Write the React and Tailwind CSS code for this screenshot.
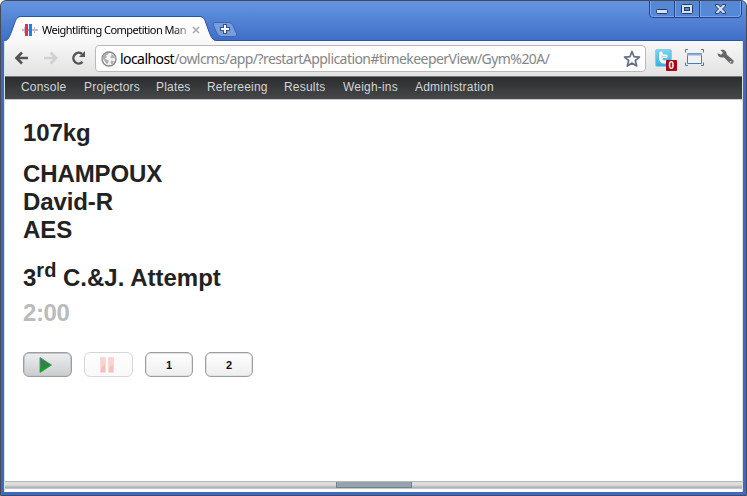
const menuItems = [
  ['Console', 'w-[63px]'],
  ['Projectors', 'w-[72px]'],
  ['Plates', 'w-[51px]'],
  ['Refereeing', 'w-[77px]'],
  ['Results', 'w-[59px]'],
  ['Weigh-ins', 'w-[72px]'],
  ['Administration', 'w-[90px]'],
];

function WindowControls() {
  return (
    <svg className="absolute left-[649px] top-0" width="94" height="19" viewBox="0 0 94 19" fill="none">
      <path d="M.5 1v13q0 3.500 3.500 3.500h85q3.500 0 3.500-3.500V1" fill="#5688d8" stroke="#25468c" />
      <path d="M1.500 1v12.500q0 3 3 3h84q3 0 3-3V1M26.500 1v15M51.500 1v15" stroke="#7ba5e6" />
      <path d="M25.500 1v16M50.500 1v16" stroke="#25468c" />
      <rect x="7.500" y="9.500" width="11" height="4" rx="1" fill="#d3e0f5" stroke="#26395f" />
      <rect x="32.500" y="4.500" width="11" height="9" rx="1" fill="#d3e0f5" stroke="#26395f" />
      <rect x="35.500" y="7.500" width="5" height="3" fill="#5688d8" stroke="#26395f" />
      <path d="M66.500 4.500h3l2 2.500 2-2.500h3v1.500L73.500 9l3 3v1.500h-3l-2-2.500-2 2.500h-3V12l3-3-3-3z" fill="#d3e0f5" stroke="#26395f" />
    </svg>
  );
}

function TabShape() {
  return (
    <svg className="absolute left-0 top-0" width="747" height="44" viewBox="0 0 747 44" fill="none">
      <defs>
        <linearGradient id="tab" x1="0" y1="0" x2="0" y2="1">
          <stop stopColor="#fff" />
          <stop offset="1" stopColor="#f8f8f8" />
        </linearGradient>
      </defs>
      <path d="M4 44V41.500C8 40 9 38 11 33l4-11c1.500-4 3-5 6-5h178c4 0 5 1.500 6.500 5l4 11c2 5 3.500 8 7.500 8h524l2 3z" fill="url(#tab)" />
      <path d="M4 41.500C8 40 9 38 11 33l4-11c1.500-4 3-5.500 6-5.500h178c4 0 5 1.500 6.500 5.500l4 11c2 5 3.500 7.500 7.500 7.500h524l2 2" stroke="#2c559f" />
      <path d="M214.500 22.500h14q3 0 4.500 3l3.500 8q1 3-2 3h-13q-3 0-4.500-3l-3.500-8q-1.500-3 1-3z" fill="#779ddd" stroke="#3a65b2" />
      <path d="M220 29h10M225 24v10" stroke="#35558f" strokeWidth="4" />
      <path d="M221 29h8M225 25v8" stroke="#f4f7fc" strokeWidth="2" />
    </svg>
  );
}

function TabIcon() {
  return (
    <svg width="16" height="14" viewBox="0 0 16 14" shapeRendering="crispEdges">
      <path d="M0 6h16v2H0zM2 4h1v6H2zM12 4h1v6h-1z" fill="#c9b7cc" />
      <path d="M3 1h3v12H3z" fill="#e52d50" />
      <path d="M7 1h3v12H7z" fill="#1684ef" />
      <path d="M6 6h1v2H6z" fill="#b6a3c8" />
    </svg>
  );
}

function NavIcons() {
  return (
    <svg width="74" height="18" viewBox="0 0 74 18" fill="none">
      <path d="M2 9h12M8 3.500L2.500 9 8 14.500" stroke="#555" strokeWidth="2.700" />
      <path d="M30 9h12M36.500 3.500L42 9l-5.500 5.500" stroke="#d0d0d0" strokeWidth="2.700" />
      <path d="M68.500 12.800A5.300 5.300 0 1 1 68 5" stroke="#555" strokeWidth="2.500" />
      <path d="M71 2v6h-6z" fill="#555" />
    </svg>
  );
}

function Globe() {
  return (
    <svg className="shrink-0" width="16" height="16" viewBox="0 0 16 16">
      <circle cx="8" cy="8" r="7" fill="#f4f4f4" stroke="#858585" strokeWidth="1.300" />
      <path d="M2 5l3-3 3-.200-1 1.700-2 1 1 1.500-2 1.500 2 1.500 2 .5-1 2.500-1 1.500-2-3L2 8zM10 3l3 1.500 1 3-2-.500-1.500.5-1.500-1.500 1.500-1zM10 9.500l3 .5-1 2.500-1.500 1-1-2z" fill="#b0b0b0" />
    </svg>
  );
}

function ToolbarIcons() {
  return (
    <svg className="mt-1.5" width="82" height="26" viewBox="0 0 82 26" fill="none">
      <defs>
        <linearGradient id="bird" x1="0" y1="0" x2="0" y2="1">
          <stop stopColor="#7fd5f0" />
          <stop offset="1" stopColor="#35afd9" />
        </linearGradient>
      </defs>
      <rect x=".5" y="2.500" width="16" height="17" rx="1.500" fill="url(#bird)" stroke="#8ccce4" />
      <path d="M6 6.200v5.300q0 3.300 3.300 3.300h2.200M6 9.200h5" stroke="#fff" strokeWidth="3.400" strokeLinecap="round" />
      <path d="M7 8v3.500q0 2 2.200 2h2.500M7 9.500h4.500" stroke="#8fd3ec" strokeWidth=".8" />
      <rect x="11" y="13" width="11" height="11" rx="1" fill="#aa0719" />
      <text x="13.500" y="22" fill="#fff" fontSize="10" fontWeight="bold" fontFamily="Liberation Sans, sans-serif">0</text>
      <path d="M32.500 6.500h14v10h-14z" fill="#eef3f8" stroke="#477eae" />
      <path d="M32 7.500h15" stroke="#8eb0cf" strokeWidth="2" />
      <path d="M30.500 5.500v-3H33M46 2.500h2.500v3M48.500 15.500v3H46M33 18.500h-2.500v-3" stroke="#477eae" />
      <path d="M65.500 3c3-1.200 6.500 1 6.200 4.500l6.200 5.500c2.200 2 -.700 5.200-3 3.200l-6.200-6c-3 1.200-6.200-.700-6.200-4l3.500 1.500 2-2z" fill="#666" />
      <circle cx="75.700" cy="14.800" r=".9" fill="#ddd" />
    </svg>
  );
}

function Toolbar() {
  return (
    <div className="flex h-[35px] shrink-0 items-start bg-linear-to-b from-[#f8f8f8] to-[#e2e2e2] pl-[9px]">
      <div className="mt-2 w-[81px]"><NavIcons /></div>
      <div className="mt-1 flex h-[27px] w-[551px] shrink-0 items-center rounded border border-[#b9b9b9] bg-white pl-[5px] pr-1">
        <Globe />
        <div className="ml-[3px] w-[516px] whitespace-nowrap font-['Noto_Sans'] text-[14px] tracking-[-0.56px] text-[#858585]">
          <span className="text-black">localhost</span>/owlcms/app/?restartApplication#timekeeperView/Gym%20A/
        </div>
        <svg className="shrink-0" width="18" height="18" viewBox="0 0 18 18">
          <path d="M9 1.500l2.100 5.200 5.400.400-4.200 3.500 1.400 5.400L9 13l-4.700 3 1.400-5.400-4.200-3.500 5.400-.4z" fill="#fff" stroke="#646b86" strokeWidth="1.700" strokeLinejoin="round" />
        </svg>
      </div>
      <div className="ml-[9px] shrink-0"><ToolbarIcons /></div>
    </div>
  );
}

function LiftButton({ children, kind = '' }) {
  const look = kind === 'focus'
    ? 'w-[49px] border-[#9b9da0] from-[#eeefef] to-[#cbccce] inset-ring inset-ring-[#c4c6c8]'
    : kind === 'disabled'
      ? 'w-[49px] border-[#888b8e] from-white to-[#eeeeee] opacity-35'
      : 'w-[48px] border-[#9b9da0] from-white to-[#eeeeee] inset-ring inset-ring-[#e2e2e2]';
  return (
    <button className={'flex h-[25px] items-center justify-center rounded-[6px] border bg-linear-to-b font-["Liberation_Sans"] text-[11px] font-bold text-[#111] ' + look}>
      {children}
    </button>
  );
}

export default function App() {
  return (
    <div className="relative flex h-[496px] w-[747px] flex-col overflow-hidden rounded-t-md border border-[#454b56] bg-linear-to-b from-[#6595e1] from-0% to-[#3b69c4] to-[9%] font-['Liberation_Sans',sans-serif]">
      <div className="absolute -left-px -top-px">
        <TabShape />
        <WindowControls />
      </div>
      <div className="relative flex h-10 shrink-0 items-start pl-[21px] pt-[22px]">
        <TabIcon />
        <div className="ml-1 mt-[-2px] w-[145px] whitespace-nowrap bg-linear-to-r from-black from-88% to-[#aaa] bg-clip-text font-['Noto_Sans'] text-[11px] leading-[17px] tracking-[-0.52px] text-transparent">
          Weightlifting Competition Man
        </div>
        <svg className="ml-[5px] mt-[3px]" width="8" height="8" viewBox="0 0 8 8">
          <path d="M1 1l6 6M7 1L1 7" stroke="#aaa" strokeWidth="1.600" />
        </svg>
      </div>
      <div className="relative mx-[3px] mb-[3px] flex min-h-0 flex-1 flex-col border-x border-[#dedede] bg-white">
        <Toolbar />
        <nav className="flex h-6 shrink-0 border-b border-[#c9c9c9] border-t border-t-[#777] bg-linear-to-b from-[#2b2d2f] to-[#454749] pl-4 text-[12px] leading-[21px] tracking-[0.2px] text-[#d3d5d7]">
          {menuItems.map(([label, width]) => (
            <span key={label} className={width + ' shrink-0 whitespace-nowrap'}>{label}</span>
          ))}
        </nav>
        <main className="flex-1 pl-[18px] pt-[19px] text-[24px] font-bold leading-7 tracking-[-0.1px] text-[#222]">
          <p>107kg</p>
          <div className="mt-[13px]">
            <p>CHAMPOUX</p>
            <p>David-R</p>
            <p>AES</p>
          </div>
          <p className="mt-5 tracking-normal">3<sup className="top-[-0.45em] text-[20px]">rd</sup> C.&amp;J. Attempt</p>
          <p className="mt-[7px] tracking-[-0.4px] text-[#bbb]">2:00</p>
          <div className="mt-[25px] flex gap-3 tracking-normal">
            <LiftButton kind="focus">
              <svg className="mr-1" width="14" height="16" viewBox="0 0 14 16">
                <path d="M1 .5L12.500 8 1 15.500z" fill="#318244" stroke="#5b947c" />
                <path d="M1.500 15V11q6 0 9-3.500l1.500.5z" fill="#08a414" />
              </svg>
            </LiftButton>
            <LiftButton kind="disabled">
              <svg className="mr-[3px]" width="14" height="16" viewBox="0 0 14 16">
                <path d="M.5.5h5v15h-5zM8.500.5h5v15h-5z" fill="#ed8279" stroke="#e69b96" />
                <path d="M1 11l4-4v8H1zM9 11l4-4v8H9z" fill="#f04b3e" />
              </svg>
            </LiftButton>
            <LiftButton>1</LiftButton>
            <LiftButton>2</LiftButton>
          </div>
        </main>
        <div className="mb-[3px] h-2 shrink-0 border-t border-[#b8b8b8] bg-linear-to-b from-[#dcdedf] from-40% via-[#aeb0b1] via-80% to-[#d0d0d0]">
          <div className="mx-auto h-1.5 w-[76px] border border-t-0 border-[#6f818b] bg-[#94a3ac]" />
        </div>
      </div>
    </div>
  );
}
